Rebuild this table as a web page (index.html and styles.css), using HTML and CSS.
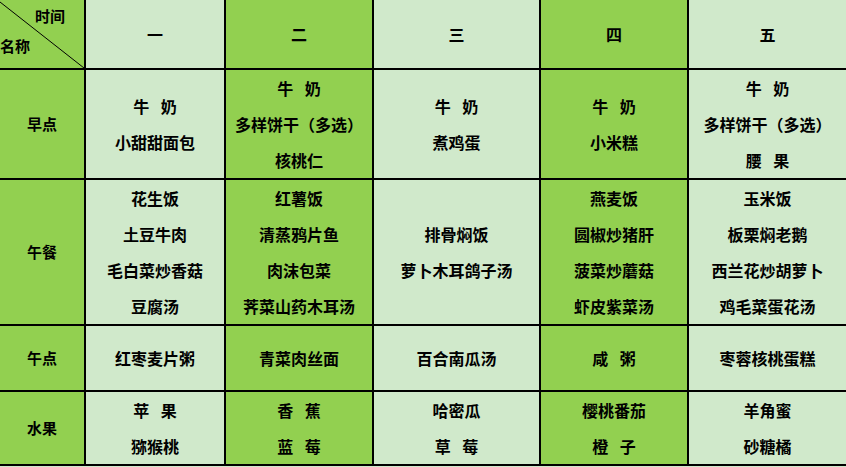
FILE: index.html
```html
<!DOCTYPE html>
<html lang="zh-CN">
<head>
<meta charset="utf-8">
<title>一周食谱</title>
<link rel="stylesheet" href="styles.css">
</head>
<body>
<div class="menu">
  <div class="cell corner dark">
    <svg class="diag" width="84" height="68" viewBox="0 0 84 68"><line x1="0" y1="2" x2="84" y2="68" stroke="#000" stroke-width="1"/></svg>
    <div class="time">时间</div>
    <div class="name">名称</div>
  </div>
  <div class="cell light">一</div>
  <div class="cell dark">二</div>
  <div class="cell light">三</div>
  <div class="cell dark">四</div>
  <div class="cell light">五</div>

  <div class="cell dark label">早点</div>
  <div class="cell light"><div>牛 奶</div><div>小甜甜面包</div></div>
  <div class="cell dark"><div>牛 奶</div><div>多样饼干（多选）</div><div>核桃仁</div></div>
  <div class="cell light"><div>牛 奶</div><div>煮鸡蛋</div></div>
  <div class="cell dark"><div>牛 奶</div><div>小米糕</div></div>
  <div class="cell light"><div>牛 奶</div><div>多样饼干（多选）</div><div>腰 果</div></div>

  <div class="cell dark label">午餐</div>
  <div class="cell light"><div>花生饭</div><div>土豆牛肉</div><div>毛白菜炒香菇</div><div>豆腐汤</div></div>
  <div class="cell dark"><div>红薯饭</div><div>清蒸鸦片鱼</div><div>肉沫包菜</div><div>荠菜山药木耳汤</div></div>
  <div class="cell light"><div>排骨焖饭</div><div>萝卜木耳鸽子汤</div></div>
  <div class="cell dark"><div>燕麦饭</div><div>圆椒炒猪肝</div><div>菠菜炒蘑菇</div><div>虾皮紫菜汤</div></div>
  <div class="cell light"><div>玉米饭</div><div>板栗焖老鹅</div><div>西兰花炒胡萝卜</div><div>鸡毛菜蛋花汤</div></div>

  <div class="cell dark label">午点</div>
  <div class="cell light">红枣麦片粥</div>
  <div class="cell dark">青菜肉丝面</div>
  <div class="cell light">百合南瓜汤</div>
  <div class="cell dark">咸 粥</div>
  <div class="cell light">枣蓉核桃蛋糕</div>

  <div class="cell dark label">水果</div>
  <div class="cell light"><div>苹 果</div><div>猕猴桃</div></div>
  <div class="cell dark"><div>香 蕉</div><div>蓝 莓</div></div>
  <div class="cell light"><div>哈密瓜</div><div>草 莓</div></div>
  <div class="cell dark"><div>樱桃番茄</div><div>橙 子</div></div>
  <div class="cell light"><div>羊角蜜</div><div>砂糖橘</div></div>
</div>
</body>
</html>
```

FILE: styles.css
```css
html, body {
  margin: 0;
  padding: 0;
  background: #d0e9cb;
}
.menu {
  width: 846px;
  display: grid;
  grid-template-columns: 84px 138px 146px 165px 146px 157px;
  grid-template-rows: 68px 108px 144px 64px 72px;
  gap: 2px;
  background: #000;
  border-bottom: 2px solid #000;
  font-family: "Noto Sans CJK SC", "Noto Sans", sans-serif;
  font-size: 16px;
  font-weight: 700;
  color: #000;
}
.cell {
  display: flex;
  flex-direction: column;
  align-items: center;
  justify-content: center;
  line-height: 36px;
  word-spacing: 8px;
  white-space: nowrap;
}
.dark { background: #92d050; }
.light { background: #d0e9cb; }
.label { font-size: 15px; }
.corner {
  position: relative;
  align-items: stretch;
  justify-content: flex-start;
  font-size: 15px;
  line-height: 18px;
}
.diag {
  position: absolute;
  left: 0;
  top: 0;
}
.time {
  margin-top: 7px;
  padding-left: 35px;
}
.name {
  margin-top: 12px;
  padding-left: 0;
}
```
